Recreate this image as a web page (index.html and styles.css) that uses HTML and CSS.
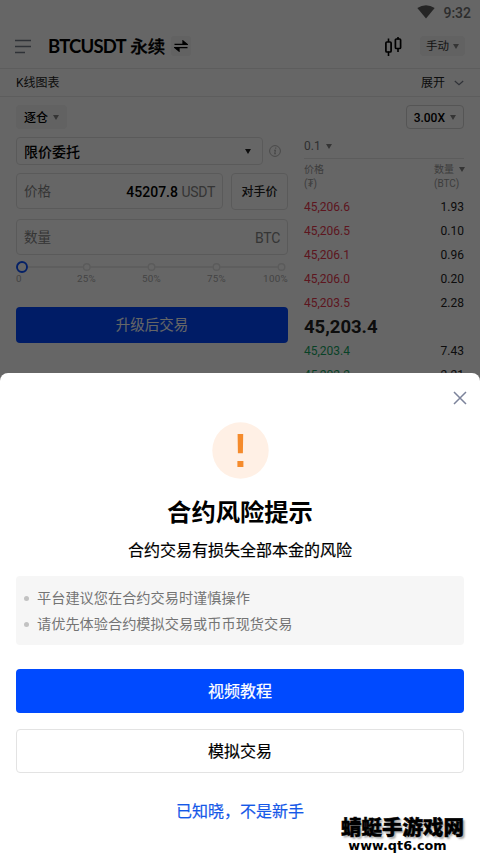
FILE: index.html
```html
<!DOCTYPE html>
<html lang="zh-CN">
<head>
<meta charset="utf-8">
<title>BTCUSDT 永续</title>
<link rel="stylesheet" href="styles.css">
</head>
<body>
<div class="screen">
  <div class="status">
    <svg width="18" height="14" viewBox="0 0 18 14"><path d="M9 13.500L.3 3Q9-2.500 17.700 3Z" fill="#5c5c5c"/></svg>
    <span>9:32</span>
  </div>
  <header class="header">
    <svg class="menu" width="16" height="15" viewBox="0 0 16 15"><path d="M0 1.500H16M0 7.500H16M0 13.500H10" stroke="#777d8b" stroke-width="1.300"/></svg>
    <h1><span class="pair">BTCUSDT</span> 永续</h1>
    <span class="swap"><svg width="14" height="12" viewBox="0 0 14 12"><path d="M.5 4.300H13L9 1V4.300M13.500 7.700H1L5 11V7.700" fill="#000" stroke="#000" stroke-width="1.300"/></svg></span>
    <svg class="candles" width="19" height="19" viewBox="0 0 19 19"><path d="M4.500 1.500V5M4.500 14.500V19M14 0V2.500M14 11V15" stroke="#000" stroke-width="1.600"/><rect x="1.900" y="5" width="5.200" height="10" rx="1" fill="none" stroke="#000" stroke-width="1.700"/><rect x="11.400" y="2" width="5.200" height="9.500" rx="1" fill="none" stroke="#000" stroke-width="1.700"/></svg>
    <span class="mode">手动<i class="tri"></i></span>
  </header>
  <div class="chart-bar"><span>K线图表</span><span class="expand">展开<svg width="10" height="6" viewBox="0 0 10 6"><path d="M.8 1L5 4.800L9.200 1" fill="none" stroke="#777d8b" stroke-width="1.200"/></svg></span></div>
  <div class="chips"><span class="chip">逐仓<i class="tri"></i></span><span class="chip lever">3.00X<i class="tri"></i></span></div>
  <main class="trade">
    <section class="form">
      <div class="line">
        <div class="field select"><b>限价委托</b><i class="tri dark"></i></div>
        <svg class="info" width="12" height="12" viewBox="0 0 12 12"><circle cx="6" cy="6" r="5.400" fill="none" stroke="#b5b5b5"/><path d="M6.700 2.600V3.800M5 5.200H6.400L5.700 8.800H7" fill="none" stroke="#b5b5b5" stroke-width="1.100"/></svg>
      </div>
      <div class="line prices">
        <div class="field price"><span class="hint">价格</span><span><b>45207.8</b> <span class="unit">USDT</span></span></div>
        <div class="field best">对手价</div>
      </div>
      <div class="field amount"><span class="hint">数量</span><span class="unit">BTC</span></div>
      <div class="slider">
        <svg width="272" height="14" viewBox="0 0 272 14"><path d="M12 7H262" stroke="#e6e6e6" stroke-width="1.500"/><g fill="#fff" stroke="#e3e3e3" stroke-width="1.400"><circle cx="70.800" cy="7" r="3.300"/><circle cx="135.500" cy="7" r="3.300"/><circle cx="200.500" cy="7" r="3.300"/><circle cx="265.500" cy="7" r="3.300"/></g><circle cx="6" cy="7" r="5" fill="#fff" stroke="#0a50ff" stroke-width="1.900"/></svg>
        <div class="marks"><span>0</span><span>25%</span><span>50%</span><span>75%</span><span>100%</span></div>
      </div>
      <div class="upgrade">升级后交易</div>
    </section>
    <section class="book">
      <div class="step">0.1<i class="tri"></i></div>
      <div class="heads"><div>价格<br>(₮)</div><div class="qty">数量<i class="tri"></i><br>(BTC)</div></div>
      <div class="row sell"><span>45,206.6</span><em>1.93</em></div>
      <div class="row sell"><span>45,206.5</span><em>0.10</em></div>
      <div class="row sell"><span>45,206.1</span><em>0.96</em></div>
      <div class="row sell"><span>45,206.0</span><em>0.20</em></div>
      <div class="row sell"><span>45,203.5</span><em>2.28</em></div>
      <div class="row last">45,203.4</div>
      <div class="row buy"><span>45,203.4</span><em>7.43</em></div>
      <div class="row buy"><span>45,202.2</span><em>2.21</em></div>
    </section>
  </main>
</div>
<div class="scrim"></div>
<div class="sheet">
  <svg class="close" width="14" height="14" viewBox="0 0 14 14"><path d="M1 1L13 13M13 1L1 13" stroke="#7c839b" stroke-width="1.500"/></svg>
  <svg class="warn" width="57" height="57" viewBox="0 0 57 57"><circle cx="28.500" cy="28.500" r="28.200" fill="#fff0e5"/><path d="M25.600 12H31.200L30.900 31.200H25.900ZM25.400 39H31.400V45H25.400Z" fill="#f58b2c"/></svg>
  <h2>合约风险提示</h2>
  <p class="sub">合约交易有损失全部本金的风险</p>
  <ul class="tips"><li>平台建议您在合约交易时谨慎操作</li><li>请优先体验合约模拟交易或币币现货交易</li></ul>
  <div class="btn primary">视频教程</div>
  <div class="btn ghost">模拟交易</div>
  <div class="link">已知晓，不是新手</div>
</div>
<div class="mark"><div class="mark-name">蜻蜓手游戏网</div><div class="mark-url">www.qt6.com</div></div>
</body>
</html>
```
FILE: styles.css
```css
* { box-sizing: border-box; }
body { margin: 0; width: 480px; height: 853px; overflow: hidden; position: relative; background: #fff; color: #000; font: 14px/1 Roboto, "Noto Sans CJK SC", sans-serif; }
svg { display: block; flex: none; }
.tri { display: inline-block; flex: none; border: 3px solid transparent; border-top: 5px solid #858585; border-bottom: 0; }
.tri.dark { border-top-color: #222; }
.screen { height: 374px; overflow: hidden; }
.status { height: 26px; display: flex; justify-content: flex-end; align-items: center; gap: 8px; padding: 0 9px 0 0; font-size: 14px; font-weight: 500; color: #707070; }
.status svg { margin-top: -3px; }
.header { height: 43px; display: flex; align-items: center; padding: 0 15px 2px; border-bottom: 1px solid #e9e9e9; }
.menu { margin-top: 1px; }
h1 { margin: 2px 0 0 17px; font-size: 17.500px; font-weight: 500; white-space: nowrap; width: 118px; letter-spacing: 0; -webkit-text-stroke: .3px #000; }
.pair { font-family: Lato, sans-serif; font-weight: 700; font-size: 18.500px; letter-spacing: -.8px; -webkit-text-stroke: 0; }
.swap { width: 20px; height: 20px; margin-left: 5px; display: grid; place-items: center; background: #f4f4f4; border-radius: 3px; }
.candles { margin-left: auto; margin-right: 17px; }
.mode { width: 45px; height: 20px; display: flex; align-items: center; justify-content: center; gap: 4px; font-size: 11.500px; background: #f4f4f4; border-radius: 4px; color: #333; padding-top: 1px; }
.chart-bar { height: 28px; display: flex; align-items: center; justify-content: space-between; padding: 1px 16px 0; border-bottom: 1px solid #e9e9e9; font-size: 12px; color: #222; }
.expand { display: flex; align-items: center; gap: 9px; }
.chips { display: flex; justify-content: space-between; margin: 8px 16px 0; height: 24px; }
.chip { display: flex; align-items: center; gap: 5px; padding: 1px 8px 0; border-radius: 4px; background: #f4f4f4; font-size: 12px; font-weight: 500; }
.lever { background: none; border: 1px solid #d4d4d4; padding: 1px 7px 0; }
.trade { display: flex; justify-content: space-between; padding: 8px 16px 0; }
.form { width: 272px; }
.line { display: flex; align-items: center; }
.field { display: flex; align-items: center; justify-content: space-between; border: 1px solid #e2e2e2; border-radius: 4px; padding: 1px 7px 0; }
.field b { font-weight: 500; }
.select { width: 247px; height: 28px; padding-right: 11px; }
.info { margin-left: 6px; }
.prices { justify-content: space-between; margin-top: 8px; align-items: flex-start; }
.price { width: 207px; height: 36px; }
.best { width: 57px; height: 37px; font-size: 12px; justify-content: center; padding: 0; color: #222; font-weight: 500; }
.amount { height: 36px; margin-top: 9px; }
.hint { color: #858585; font-size: 13.500px; }
.unit { color: #858585; font-size: 14px; letter-spacing: -.3px; }
.slider { margin-top: 5px; }
.marks { display: grid; grid-template-columns: 38px 65px 65px 65px 39px; font-size: 9.800px; color: #aaa; line-height: 10px; letter-spacing: .3px; text-align: center; }
.marks span:first-child { text-align: left; }
.marks span:last-child { text-align: right; }
.upgrade { height: 36px; margin-top: 23px; padding-top: 2px; background: #0048ff; color: #fff; border-radius: 4px; display: grid; place-items: center; font-size: 14.500px; }
.book { width: 160px; }
.step { height: 22px; display: flex; align-items: center; gap: 5px; font-size: 12px; color: #777; padding-bottom: 3px; border-bottom: 1px solid #e5e5e5; }
.heads { display: flex; justify-content: space-between; height: 36px; padding-top: 4px; font-size: 10px; line-height: 14px; color: #999; }
.qty { width: 30px; white-space: nowrap; }
.qty .tri { margin: 0 0 1px 5px; }
.row { height: 24px; display: flex; align-items: center; justify-content: space-between; font-size: 12px; }
em { font-style: normal; color: #222; }
.sell { color: #e8384f; }
.buy { color: #15a563; }
.last { font-size: 18.500px; font-weight: 700; color: #222; }
.scrim { position: absolute; inset: 0; background: rgba(0, 0, 0, .6); }
.sheet { position: absolute; left: 0; right: 0; bottom: 0; height: 480px; background: #fff; border-radius: 8px 8px 0 0; padding: 18px 16px 0; display: flex; flex-direction: column; align-items: center; }
.close { align-self: flex-end; margin-right: -3px; }
.warn { margin-top: 17px; }
h2 { margin: 22px 0 0; font-size: 24.300px; line-height: 24px; font-weight: 700; }
.sub { margin: 18px 0 0; font-size: 16px; line-height: 16px; -webkit-text-stroke: .2px; }
.tips { list-style: none; margin: 17px 0 0; width: 100%; height: 69px; padding: 10px 8px 0; background: #f6f6f6; border-radius: 4px; font-size: 14.200px; line-height: 25.500px; color: #747474; }
.tips li { display: flex; align-items: center; gap: 8px; }
.tips li::before { content: ""; width: 5px; height: 5px; border-radius: 50%; background: #c2c2c2; }
.btn { width: 100%; height: 44px; padding-top: 2px; display: grid; place-items: center; border-radius: 4px; font-size: 16px; -webkit-text-stroke: .2px; }
.primary { margin-top: 24px; background: #004aff; color: #fff; }
.ghost { margin-top: 16px; border: 1px solid #e3e3e3; }
.link { margin-top: 31px; font-size: 16px; line-height: 16px; color: #1558e8; -webkit-text-stroke: .2px; }
.mark { position: absolute; left: 341px; top: 817px; text-align: center; white-space: nowrap; }
.mark-name { font-size: 20.500px; line-height: 22px; font-weight: 900; -webkit-text-stroke: .5px #000; text-shadow: 2px 2px 2px #aaa; }
.mark-url { font: 700 12.800px/14px "DejaVu Sans", sans-serif; margin-right: 10px; }
```
